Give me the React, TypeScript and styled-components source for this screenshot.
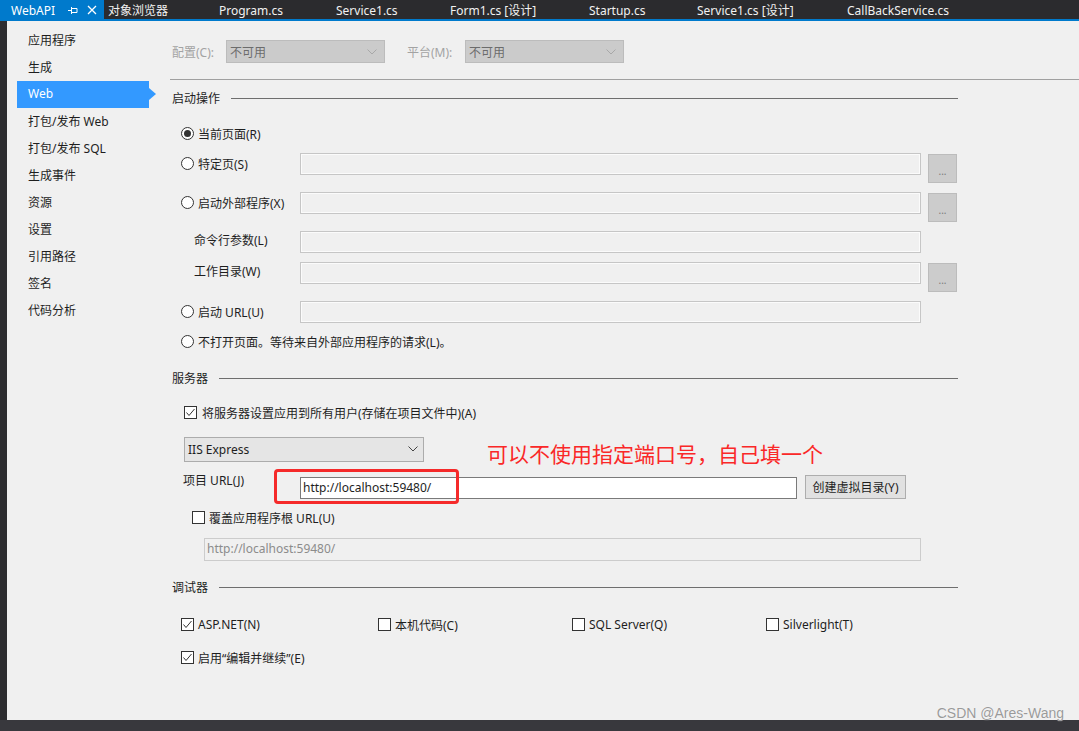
import styled, { createGlobalStyle, css } from 'styled-components';

const GlobalStyle = createGlobalStyle`
  html, body {
    margin: 0;
    padding: 0;
    background: #f0f0f0;
  }
  body {
    font-family: "Noto Sans", "Noto Sans CJK SC", sans-serif;
    font-size: 12px;
    color: #1e1e1e;
  }
`;

const tabs = [
  { label: '对象浏览器', w: 111 },
  { label: 'Program.cs', w: 117 },
  { label: 'Service1.cs', w: 114 },
  { label: 'Form1.cs [设计]', w: 139 },
  { label: 'Startup.cs', w: 108 },
  { label: 'Service1.cs [设计]', w: 150 },
  { label: 'CallBackService.cs', w: 140 },
];

const navItems = ['应用程序', '生成', 'Web', '打包/发布 Web', '打包/发布 SQL', '生成事件', '资源', '设置', '引用路径', '签名', '代码分析'];

const Chevron = ({ color }: { color: string }) => (
  <svg width="10" height="6" viewBox="0 0 10 6">
    <polyline points="0.5,0.5 5,5 9.5,0.5" fill="none" stroke={color} strokeWidth="1" />
  </svg>
);

const Check = () => (
  <svg width="11" height="11" viewBox="0 0 11 11">
    <polyline points="1.5,5.5 4,8.5 9.5,2" fill="none" stroke="#333" strokeWidth="1" />
  </svg>
);

export default function App() {
  return (
    <Screen>
      <GlobalStyle />
      <TabBar>
        <ActiveTab>
          WebAPI
          <TabIcons>
            <svg width="10" height="10" viewBox="0 0 10 10">
              <path d="M0 5.5h3.5M3.5 2v7M3.5 3.5h5.5v4h-5.5" fill="none" stroke="#fff" strokeWidth="1" />
            </svg>
            <svg width="10" height="10" viewBox="0 0 10 10">
              <path d="M1 1l8 8M9 1l-8 8" fill="none" stroke="#fff" strokeWidth="1.3" />
            </svg>
          </TabIcons>
        </ActiveTab>
        {tabs.map(t => (
          <Tab key={t.label} $w={t.w}>{t.label}</Tab>
        ))}
      </TabBar>

      <Body>
        <Strip />
        <Nav>
          {navItems.map(n => (
            <NavItem key={n} $active={n === 'Web'}>{n}</NavItem>
          ))}
        </Nav>

        <Main>
          <ConfigRow>
            <DimLabel $w={54}>配置(C):</DimLabel>
            <DisabledSelect>不可用<Chevron color="#a8a8a8" /></DisabledSelect>
            <DimLabel $w={58} $gap={22}>平台(M):</DimLabel>
            <DisabledSelect>不可用<Chevron color="#a8a8a8" /></DisabledSelect>
          </ConfigRow>
          <Divider />

          <SectionHead $top={7}>启动操作<HeadLine /></SectionHead>

          <FieldRow $top={14} $indent={11}>
            <LabelCell $w={119}><Radio $on />当前页面(R)</LabelCell>
          </FieldRow>
          <FieldRow $top={8} $indent={11}>
            <LabelCell $w={119}><Radio />特定页(S)</LabelCell>
            <TextBox />
            <Browse>...</Browse>
          </FieldRow>
          <FieldRow $top={9} $indent={11}>
            <LabelCell $w={119}><Radio />启动外部程序(X)</LabelCell>
            <TextBox />
            <Browse>...</Browse>
          </FieldRow>
          <FieldRow $top={9} $indent={24}>
            <LabelCell $w={106} $lift={4}>命令行参数(L)</LabelCell>
            <TextBox />
          </FieldRow>
          <FieldRow $top={9} $indent={24}>
            <LabelCell $w={106} $lift={5}>工作目录(W)</LabelCell>
            <TextBox />
            <Browse>...</Browse>
          </FieldRow>
          <FieldRow $top={9} $indent={11}>
            <LabelCell $w={119}><Radio />启动 URL(U)</LabelCell>
            <TextBox />
          </FieldRow>
          <FieldRow $top={8} $indent={11}>
            <LabelCell><Radio />不打开页面。等待来自外部应用程序的请求(L)。</LabelCell>
          </FieldRow>

          <SectionHead $top={14}>服务器<HeadLine /></SectionHead>

          <FieldRow $top={13} $indent={14}>
            <LabelCell $gap={5}><CheckBox><Check /></CheckBox>将服务器设置应用到所有用户(存储在项目文件中)(A)</LabelCell>
          </FieldRow>
          <FieldRow $top={13} $indent={14}>
            <ServerSelect>IIS Express<Chevron color="#444" /></ServerSelect>
            <Note>可以不使用指定端口号，自己填一个</Note>
          </FieldRow>
          <UrlRow>
            <UrlLabel>项目 URL(J)</UrlLabel>
            <UrlInput>http://localhost:59480/</UrlInput>
            <PlainButton>创建虚拟目录(Y)</PlainButton>
            <RedBox />
          </UrlRow>
          <FieldRow $top={8} $indent={22}>
            <LabelCell><CheckBox />覆盖应用程序根 URL(U)</LabelCell>
          </FieldRow>
          <FieldRow $top={9} $indent={34}>
            <GreyInput>http://localhost:59480/</GreyInput>
          </FieldRow>

          <SectionHead $top={15}>调试器<HeadLine /></SectionHead>

          <DebugGrid>
            <LabelCell><CheckBox><Check /></CheckBox>ASP.NET(N)</LabelCell>
            <LabelCell><CheckBox />本机代码(C)</LabelCell>
            <LabelCell><CheckBox />SQL Server(Q)</LabelCell>
            <LabelCell><CheckBox />Silverlight(T)</LabelCell>
          </DebugGrid>
          <FieldRow $top={11} $indent={11}>
            <LabelCell><CheckBox><Check /></CheckBox>启用“编辑并继续”(E)</LabelCell>
          </FieldRow>
        </Main>
      </Body>
      <BottomBar />
      <Watermark>CSDN @Ares-Wang</Watermark>
    </Screen>
  );
}

const Screen = styled.div`
  position: relative;
  width: 1079px;
  height: 731px;
  display: flex;
  flex-direction: column;
  overflow: hidden;
  background: #f0f0f0;
`;

const TabBar = styled.div`
  display: flex;
  height: 19px;
  background: #2b2b2e;
  border-bottom: 2px solid #007acc;
  flex: none;
`;

const ActiveTab = styled.div`
  width: 104px;
  box-sizing: border-box;
  padding: 1px 0 0 11px;
  display: flex;
  align-items: center;
  background: #007acc;
  color: #fff;
  font-size: 12px;
`;

const TabIcons = styled.span`
  display: flex;
  align-items: center;
  gap: 9px;
  margin-left: 13px;
`;

const Tab = styled.div<{ $w: number }>`
  width: ${p => p.$w}px;
  box-sizing: border-box;
  padding: 1px 0 0 4px;
  display: flex;
  align-items: center;
  color: #f1f1f1;
  white-space: nowrap;
  flex: none;
`;

const Body = styled.div`
  flex: 1;
  display: flex;
  min-height: 0;
`;

const Strip = styled.div`
  width: 7px;
  background: #2d2d30;
  flex: none;
`;

const Nav = styled.div`
  width: 153px;
  flex: none;
  padding-top: 6px;
  box-sizing: border-box;
`;

const NavItem = styled.div<{ $active?: boolean }>`
  position: relative;
  margin-left: 10px;
  width: 132px;
  height: 27px;
  box-sizing: border-box;
  padding: 0 0 2px 11px;
  display: flex;
  align-items: center;
  white-space: nowrap;
  ${p => p.$active && css`
    background: #3399ff;
    color: #fff;
    &::after {
      content: '';
      position: absolute;
      left: 132px;
      top: 7px;
      border-left: 7px solid #3399ff;
      border-top: 6px solid transparent;
      border-bottom: 6px solid transparent;
    }
  `}
`;

const Main = styled.div`
  flex: 1;
  padding-left: 10px;
  display: flex;
  flex-direction: column;
`;

const ConfigRow = styled.div`
  display: flex;
  align-items: center;
  margin-top: 19px;
  height: 23px;
  padding-left: 2px;
`;

const DimLabel = styled.span<{ $w: number; $gap?: number }>`
  width: ${p => p.$w}px;
  margin-left: ${p => p.$gap || 0}px;
  color: #a3a3a3;
`;

const DisabledSelect = styled.div`
  width: 159px;
  height: 23px;
  box-sizing: border-box;
  background: #cbcbcb;
  border: 1px solid #bcbcbc;
  color: #6c6c6c;
  display: flex;
  align-items: center;
  justify-content: space-between;
  padding: 0 7px 0 3px;
`;

const Divider = styled.div`
  margin-top: 16px;
  height: 1px;
  background: #a0a0a0;
`;

const SectionHead = styled.div<{ $top: number }>`
  margin-top: ${p => p.$top}px;
  width: 788px;
  height: 22px;
  padding-left: 2px;
  box-sizing: border-box;
  display: flex;
  align-items: center;
`;

const HeadLine = styled.span`
  flex: 1;
  height: 1px;
  margin-left: 11px;
  background: #6e6e6e;
`;

const FieldRow = styled.div<{ $top: number; $indent: number }>`
  display: flex;
  align-items: flex-start;
  margin-top: ${p => p.$top}px;
  padding-left: ${p => p.$indent}px;
`;

const LabelCell = styled.div<{ $w?: number; $gap?: number; $lift?: number }>`
  ${p => p.$w && css`width: ${p.$w}px;`}
  flex: none;
  height: 22px;
  box-sizing: border-box;
  padding-bottom: ${p => p.$lift ?? 1}px;
  display: flex;
  align-items: center;
  gap: ${p => p.$gap ?? 4}px;
  white-space: nowrap;
`;

const Radio = styled.span<{ $on?: boolean }>`
  width: 13px;
  height: 13px;
  box-sizing: border-box;
  border-radius: 50%;
  border: 1px solid #333;
  background: #fff;
  display: flex;
  align-items: center;
  justify-content: center;
  flex: none;
  ${p => p.$on && css`
    &::after {
      content: '';
      width: 7px;
      height: 7px;
      border-radius: 50%;
      background: #333;
    }
  `}
`;

const CheckBox = styled.span`
  width: 13px;
  height: 13px;
  box-sizing: border-box;
  border: 1px solid #333;
  background: #fff;
  display: flex;
  align-items: center;
  justify-content: center;
  flex: none;
`;

const TextBox = styled.div`
  width: 621px;
  height: 22px;
  box-sizing: border-box;
  border: 1px solid #c6c6c6;
  box-shadow: inset 0 0 0 1px #fbfbfb;
  background: #f0f0f0;
  flex: none;
`;

const Browse = styled.div`
  width: 29px;
  height: 29px;
  margin: 1px 0 0 7px;
  box-sizing: border-box;
  background: #cccccc;
  border: 1px solid #bcbcbc;
  color: #7a7a7a;
  font-size: 10px;
  display: flex;
  align-items: center;
  justify-content: center;
  padding-top: 5px;
  flex: none;
`;

const ServerSelect = styled.div`
  width: 240px;
  height: 25px;
  box-sizing: border-box;
  background: #e5e5e5;
  border: 1px solid #acacac;
  display: flex;
  align-items: center;
  justify-content: space-between;
  padding: 0 5px 1px 3px;
  flex: none;
`;

const Note = styled.div`
  margin: 3px 0 0 63px;
  font-size: 21px;
  line-height: 26px;
  color: #fa2828;
  font-family: "Noto Sans CJK SC", sans-serif;
  white-space: nowrap;
`;

const UrlRow = styled.div`
  position: relative;
  display: flex;
  align-items: flex-start;
  margin-top: 6px;
  padding-left: 13px;
`;

const UrlLabel = styled.div`
  width: 117px;
  height: 18px;
  line-height: 18px;
  flex: none;
`;

const UrlInput = styled.div`
  width: 497px;
  height: 22px;
  margin-top: 5px;
  box-sizing: border-box;
  background: #fff;
  border: 1px solid #7a7a7a;
  padding-left: 2px;
  line-height: 19px;
  flex: none;
`;

const PlainButton = styled.div`
  width: 101px;
  height: 24px;
  margin: 3px 0 0 8px;
  box-sizing: border-box;
  background: #e1e1e1;
  border: 1px solid #adadad;
  display: flex;
  align-items: center;
  justify-content: center;
  padding-bottom: 1px;
  white-space: nowrap;
  flex: none;
`;

const RedBox = styled.div`
  position: absolute;
  left: 104px;
  top: -3px;
  width: 185px;
  height: 35px;
  box-sizing: border-box;
  border: 3px solid #f52a2a;
  border-radius: 4px;
`;

const GreyInput = styled.div`
  width: 717px;
  height: 23px;
  box-sizing: border-box;
  border: 1px solid #cccccc;
  background: #f0f0f0;
  color: #8c8c8c;
  padding-left: 2px;
  line-height: 20px;
`;

const DebugGrid = styled.div`
  display: grid;
  grid-template-columns: 197px 194px 194px auto;
  margin-top: 16px;
  padding-left: 11px;
`;

const BottomBar = styled.div`
  height: 11px;
  background: #38383d;
  flex: none;
`;

const Watermark = styled.div`
  position: absolute;
  right: 15px;
  bottom: 10px;
  font-family: "Liberation Sans", Arial, sans-serif;
  font-size: 14px;
  line-height: 16px;
  color: #9a9a9a;
  text-shadow: 0 0 1px #fff;
`;
